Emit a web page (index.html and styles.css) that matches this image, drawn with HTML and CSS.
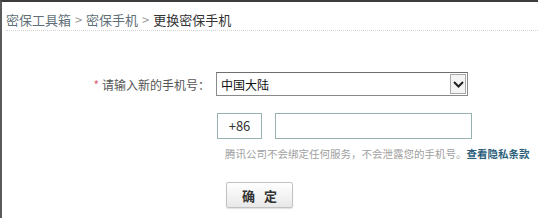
FILE: index.html
```html
<!DOCTYPE html>
<html lang="zh-CN">
<head>
    <meta charset="UTF-8">
    <title>更换密保手机</title>
    <link rel="stylesheet" href="styles.css">
</head>
<body>

<div class="panel">
    <div class="crumbs">
        <a href="#">密保工具箱</a> <span class="sep">&gt;</span> <a href="#">密保手机</a> <span class="sep">&gt;</span> <span class="current">更换密保手机</span>
    </div>

    <form class="form">
        <div class="row">
            <label class="label"><em>*</em>请输入新的手机号：</label>
            <div class="select">
                <span class="select-text">中国大陆</span>
                <span class="select-arrow">
                    <svg width="11" height="7" viewBox="0 0 11 7"><path d="M1 1l4.5 4.5L10 1" fill="none" stroke="#222" stroke-width="2"/></svg>
                </span>
            </div>
        </div>

        <div class="row phone-row">
            <span class="code">+86</span>
            <input type="text" class="phone">
        </div>

        <p class="hint">腾讯公司不会绑定任何服务，不会泄露您的手机号。<a href="#">查看隐私条款</a></p>

        <button type="button" class="submit">确 定</button>
    </form>
</div>

</body>
</html>
```

FILE: styles.css
```css
body {
    margin: 0;
    font-family: "Noto Sans CJK SC", "Liberation Sans", sans-serif;
    background: #fff;
}

.panel {
    height: 218px;
    box-sizing: border-box;
    border-top: 2px solid #3c3c3c;
    border-left: 2px solid #5a5a5a;
}

.crumbs {
    margin-left: 4px;
    padding-top: 8px;
    height: 20px;
    line-height: 20px;
    font-size: 13px;
    color: #888;
    border-bottom: 1px dotted #d4d4d4;
    white-space: nowrap;
}

.crumbs a {
    color: #5f6f78;
    text-decoration: none;
}

.crumbs .sep {
    color: #999;
    margin: 0 1px;
}

.crumbs .current {
    color: #333;
}

.form {
    padding-top: 41px;
}

.row {
    display: flex;
    align-items: center;
}

.label {
    width: 208px;
    margin-right: 6px;
    text-align: right;
    font-size: 12px;
    color: #555;
}

.label em {
    font-style: normal;
    color: #e0607a;
    margin-right: 3px;
}

.select {
    width: 252px;
    height: 24px;
    box-sizing: border-box;
    border: 1px solid #8a8a8a;
    border-top-color: #6e6e6e;
    display: flex;
    align-items: center;
    justify-content: space-between;
}

.select-text {
    padding-left: 4px;
    font-size: 12px;
    color: #111;
}

.select-arrow {
    width: 16px;
    height: 20px;
    margin-right: 1px;
    box-sizing: border-box;
    border: 1px solid #a8a8a8;
    background: #f4f4f4;
    display: flex;
    align-items: center;
    justify-content: center;
}

.phone-row {
    margin-top: 17px;
    margin-left: 215px;
    gap: 13px;
}

.code {
    width: 45px;
    height: 26px;
    box-sizing: border-box;
    border: 1px solid #98b2b2;
    line-height: 24px;
    text-align: center;
    font-size: 13px;
    color: #333;
}

.phone {
    width: 197px;
    height: 26px;
    box-sizing: border-box;
    border: 1px solid #98b2b2;
    margin: 0;
    padding: 0 4px;
    outline: none;
}

.hint {
    margin: 8px 0 0 223px;
    font-size: 10.5px;
    line-height: 14px;
    color: #a0a0a0;
    white-space: nowrap;
}

.hint a {
    color: #2d5f7c;
    font-weight: bold;
    text-decoration: none;
}

.submit {
    display: block;
    margin: 21px 0 0 224px;
    width: 67px;
    height: 26px;
    border: 1px solid #c2c2c2;
    border-radius: 2px;
    background: linear-gradient(#ffffff, #e8e8e8);
    box-shadow: 0 1px 1px rgba(0, 0, 0, 0.12);
    font-family: "Noto Sans CJK SC", sans-serif;
    font-size: 13px;
    font-weight: bold;
    color: #333;
    letter-spacing: 3px;
    padding: 0 0 0 3px;
}
```
